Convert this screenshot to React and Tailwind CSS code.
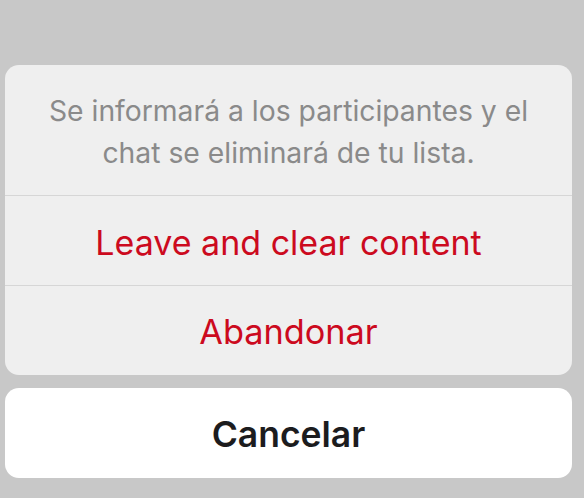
export default function App() {
  return (
    <div className="w-[584px] h-[498px] bg-[#c8c8c8] pt-[65px] pl-[5px] overflow-hidden" style={{ fontFamily: "Inter, 'Noto Sans', sans-serif" }}>
      <div className="w-[567px] flex flex-col gap-[13px]">
        <div className="bg-[#efefef] rounded-[14px] overflow-hidden">
          <div className="h-[130px] flex items-center justify-center text-center text-[#8a8a8a] text-[28.3px] leading-[42px] px-4 pt-[4px]">
            <p>
              Se informará a los participantes y el
              <br />
              chat se eliminará de tu lista.
            </p>
          </div>
          <button className="w-full h-[90px] border-t border-[#d6d6d6] text-[#cc0a1e] text-[34px] flex items-center justify-center pt-[3px]">
            Leave and clear content
          </button>
          <button className="w-full h-[90px] border-t border-[#d6d6d6] text-[#cc0a1e] text-[34.3px] flex items-center justify-center pt-[2px]">
            Abandonar
          </button>
        </div>
        <button className="w-full h-[90px] bg-white rounded-[14px] text-[#1c1c1e] text-[35.5px] font-semibold flex items-center justify-center pt-[3px]">
          Cancelar
        </button>
      </div>
    </div>
  );
}
